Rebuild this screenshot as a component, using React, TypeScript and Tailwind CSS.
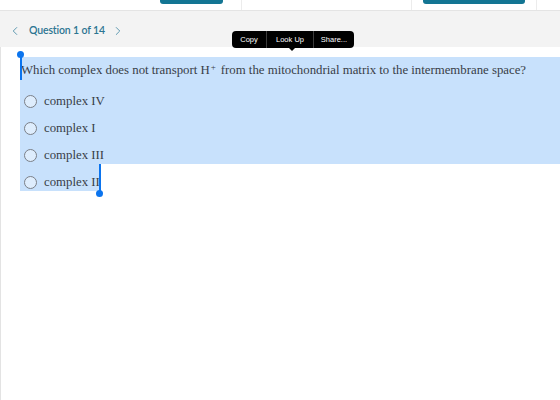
import { ChevronLeft, ChevronRight } from 'lucide-react';

const options = ['complex IV', 'complex I', 'complex III'];

function Radio() {
  return <span className="block w-[13px] h-[13px] rounded-full border-[1.5px] border-[#7b8088] bg-white/40 shrink-0" />;
}

function EditMenu() {
  return (
    <div className="absolute left-[232px] top-[31px] z-10">
      <div className="flex h-[17px] rounded-[4px] bg-black text-white text-[7.5px] font-['Liberation_Sans',sans-serif] leading-none">
        <span className="flex items-center justify-center w-[34px]">Copy</span>
        <span className="w-px bg-[#3c3c3c]" />
        <span className="flex items-center justify-center w-[46px]">Look Up</span>
        <span className="w-px bg-[#3c3c3c]" />
        <span className="flex items-center justify-center w-[40px]">Share...</span>
      </div>
      <div className="absolute left-[56px] top-[16px] w-0 h-0 border-x-[4px] border-x-transparent border-t-[4px] border-t-black" />
    </div>
  );
}

export default function App() {
  return (
    <div className="relative w-[560px] h-[400px] overflow-hidden bg-white font-['Liberation_Serif',serif]">
      {/* top toolbar, scrolled mostly out of view */}
      <div className="flex h-[11px] border-b border-[#e4e4e4] bg-white">
        <div className="ml-[160px] w-[63px] h-[4px] rounded-b-[3px] bg-[#137593]" />
        <div className="ml-[18px] w-px h-full bg-[#ececec]" />
        <div className="ml-[169px] w-px h-full bg-[#ececec]" />
        <div className="ml-[11px] w-[102px] h-[4px] rounded-b-[3px] bg-[#137593]" />
        <div className="ml-[11px] w-px h-full bg-[#ececec]" />
      </div>

      {/* question navigation */}
      <div className="flex items-center h-[36px] bg-[#f3f3f3] pl-[8px] pt-[3px] text-[#2c7591] font-['Lato',sans-serif]">
        <ChevronLeft size={14} strokeWidth={1.4} className="text-[#3f86a2]" />
        <span className="ml-[7px] text-[10.5px] font-semibold tracking-[-0.15px]">Question 1 of 14</span>
        <ChevronRight size={14} strokeWidth={1.4} className="ml-[6px] text-[#3f86a2]" />
      </div>

      <EditMenu />

      {/* question body with text selection */}
      <div className="relative h-[353px] border-l border-[#e3e3e3] pl-[19px] pt-[10px] text-[12.8px] text-[#383e47]">
        <div className="bg-[#c8e1fc]">
          <div className="h-[26px] flex items-center pl-px pt-[1px] whitespace-nowrap">
            Which complex does not transport H<sup className="text-[9px] -top-[4px] ml-[1px] mr-[5px]">+</sup>from the mitochondrial matrix to the intermembrane space?
          </div>
          {options.map((o) => (
            <div key={o} className="h-[27px] flex items-center gap-[7px] pl-[4px] pt-[9px] whitespace-nowrap">
              <Radio />
              <span className="leading-none">{o}</span>
            </div>
          ))}
        </div>
        <div className="w-[80px] h-[27px] flex items-center gap-[7px] pl-[4px] pt-[9px] bg-[#c8e1fc] whitespace-nowrap">
          <Radio />
          <span className="leading-none">complex II</span>
        </div>

        {/* selection handles */}
        <div className="absolute left-[19px] top-[4px] w-[7px] h-[7px] -ml-[3px] rounded-full bg-[#0b74ee]" />
        <div className="absolute left-[19px] top-[8px] w-[1.5px] h-[25px] bg-[#0b74ee]" />
        <div className="absolute left-[98px] top-[117px] w-[1.5px] h-[27px] bg-[#0b74ee]" />
        <div className="absolute left-[98px] top-[143px] w-[7px] h-[7px] -ml-[3px] rounded-full bg-[#0b74ee]" />
      </div>
    </div>
  );
}
